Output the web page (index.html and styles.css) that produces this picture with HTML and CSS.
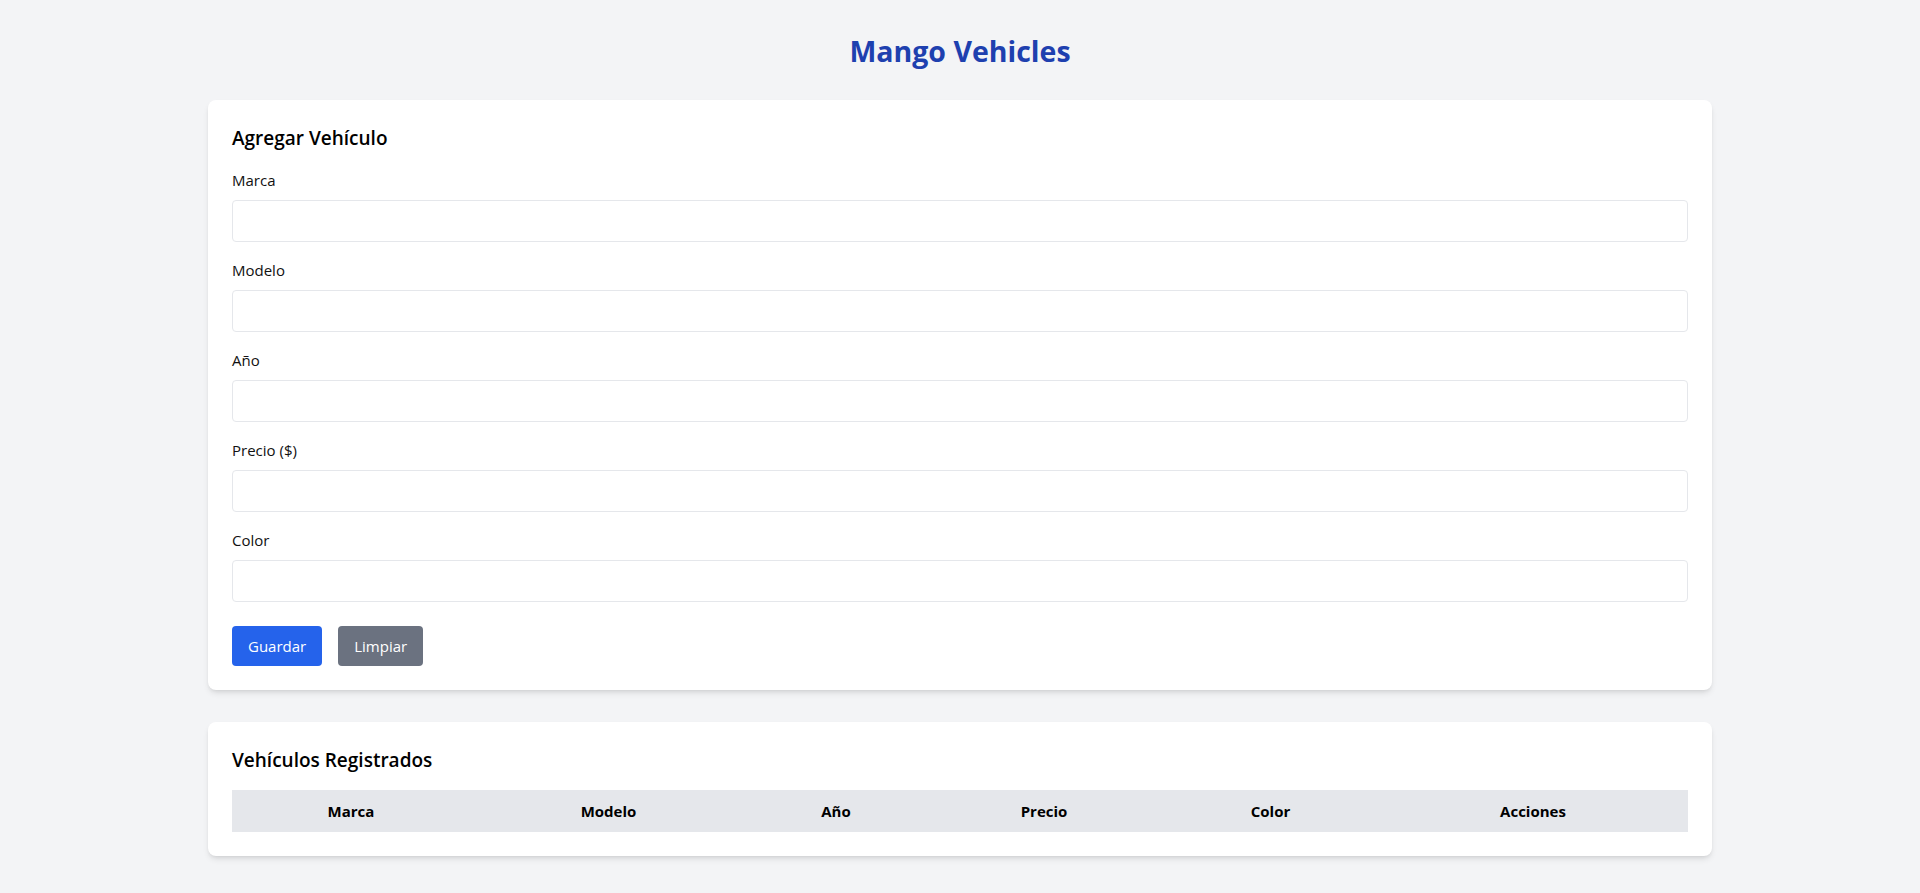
FILE: index.html
```html
<!DOCTYPE html>
<html lang="es">
<head>
<meta charset="utf-8">
<title>Mango Vehicles</title>
<link rel="stylesheet" href="styles.css">
</head>
<body>
<main class="page">
  <h1 class="title">Mango Vehicles</h1>

  <section class="card form-card">
    <h2 class="card-title">Agregar Vehículo</h2>
    <form class="form">
      <div class="field">
        <label class="label" for="marca">Marca</label>
        <input class="input" id="marca" type="text">
      </div>
      <div class="field">
        <label class="label" for="modelo">Modelo</label>
        <input class="input" id="modelo" type="text">
      </div>
      <div class="field">
        <label class="label" for="anio">Año</label>
        <input class="input" id="anio" type="number">
      </div>
      <div class="field">
        <label class="label" for="precio">Precio ($)</label>
        <input class="input" id="precio" type="number">
      </div>
      <div class="field">
        <label class="label" for="color">Color</label>
        <input class="input" id="color" type="text">
      </div>
      <div class="actions">
        <button class="btn btn-primary" type="button">Guardar</button>
        <button class="btn btn-secondary" type="button">Limpiar</button>
      </div>
    </form>
  </section>

  <section class="card list-card">
    <h2 class="card-title">Vehículos Registrados</h2>
    <table class="table">
      <thead>
        <tr>
          <th class="col-marca">Marca</th>
          <th class="col-modelo">Modelo</th>
          <th class="col-anio">Año</th>
          <th class="col-precio">Precio</th>
          <th class="col-color">Color</th>
          <th class="col-acciones">Acciones</th>
        </tr>
      </thead>
      <tbody></tbody>
    </table>
  </section>
</main>
</body>
</html>
```

FILE: styles.css
```css
* {
  box-sizing: border-box;
}

html, body {
  margin: 0;
  padding: 0;
}

body {
  background: #f3f4f6;
  font-family: "Open Sans", "Noto Sans", "Liberation Sans", sans-serif;
  color: #111827;
}

.page {
  padding: 32px 0;
  display: flex;
  flex-direction: column;
  align-items: center;
}

.title {
  margin: 0 0 32px;
  padding-top: 1px;
  height: 36px;
  font-size: 28.5px;
  line-height: 36px;
  font-weight: 700;
  color: #1e40af;
  text-align: center;
}

.card {
  width: 1504px;
  background: #ffffff;
  border-radius: 8px;
  box-shadow: 0 4px 6px -1px rgba(0, 0, 0, 0.1), 0 2px 4px -2px rgba(0, 0, 0, 0.1);
  padding: 24px;
}

.form-card {
  margin-bottom: 32px;
}

.card-title {
  margin: 0 0 16px;
  font-size: 19px;
  line-height: 28px;
  font-weight: 600;
  color: #000;
}

.form {
  display: flex;
  flex-direction: column;
}

.field {
  display: flex;
  flex-direction: column;
  margin-bottom: 16px;
}

.label {
  font-size: 15px;
  line-height: 24px;
  margin-bottom: 8px;
  color: #111;
}

.input {
  display: block;
  width: 100%;
  height: 42px;
  padding: 8px 12px;
  font: inherit;
  font-size: 15px;
  border: 1px solid #e5e7eb;
  border-radius: 4px;
  background: #fff;
  outline: none;
}

.actions {
  display: flex;
  gap: 16px;
  margin-top: 8px;
}

.btn {
  height: 40px;
  padding: 0 16px;
  border: none;
  border-radius: 4px;
  font: inherit;
  font-size: 15px;
  line-height: 24px;
  color: #fff;
  cursor: pointer;
}

.btn-primary {
  background: #2563eb;
}

.btn-secondary {
  background: #6b7280;
}

.table {
  width: 100%;
  border-collapse: collapse;
  table-layout: fixed;
}

.table th {
  background: #e5e7eb;
  height: 42px;
  padding: 8px 16px;
  font-size: 15px;
  line-height: 24px;
  font-weight: 700;
  color: #000;
  text-align: center;
}

.col-marca { width: 238px; }
.col-modelo { width: 277px; }
.col-anio { width: 178px; }
.col-precio { width: 238px; }
.col-color { width: 215px; }
.col-acciones { width: 310px; }
```
